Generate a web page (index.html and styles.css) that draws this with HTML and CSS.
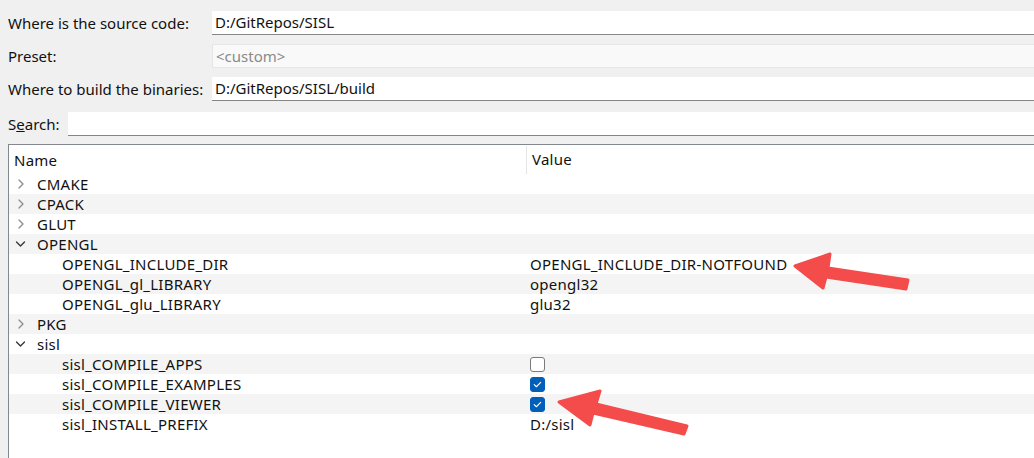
FILE: index.html
```html
<!DOCTYPE html>
<html>
<head>
<meta charset="utf-8">
<link rel="stylesheet" href="styles.css">
</head>
<body>
<div class="top">
  <div class="line">
    <div class="label">Where is the source code:</div>
    <div class="field">D:/GitRepos/SISL</div>
  </div>
  <div class="line">
    <div class="label">Preset:</div>
    <div class="field disabled">&lt;custom&gt;</div>
  </div>
  <div class="line">
    <div class="label">Where to build the binaries:</div>
    <div class="field">D:/GitRepos/SISL/build</div>
  </div>
  <div class="line search">
    <div class="label short">S<u>e</u>arch:</div>
    <div class="field"></div>
  </div>
</div>
<div class="tree">
  <div class="head">
    <div class="c1">Name</div>
    <div class="c2">Value</div>
  </div>
  <div class="row"><div class="c1"><svg class="exp" viewBox="0 0 20 20" width="20" height="20"><path d="M8 6 L12 10 L8 14" fill="none" stroke="#8c8c8c" stroke-width="1.3" stroke-linecap="round" stroke-linejoin="round"/></svg>CMAKE</div><div class="c2"></div></div>
  <div class="row alt"><div class="c1"><svg class="exp" viewBox="0 0 20 20" width="20" height="20"><path d="M8 6 L12 10 L8 14" fill="none" stroke="#8c8c8c" stroke-width="1.3" stroke-linecap="round" stroke-linejoin="round"/></svg>CPACK</div><div class="c2"></div></div>
  <div class="row"><div class="c1"><svg class="exp" viewBox="0 0 20 20" width="20" height="20"><path d="M8 6 L12 10 L8 14" fill="none" stroke="#8c8c8c" stroke-width="1.3" stroke-linecap="round" stroke-linejoin="round"/></svg>GLUT</div><div class="c2"></div></div>
  <div class="row alt"><div class="c1"><svg class="exp" viewBox="0 0 20 20" width="20" height="20"><path d="M5.5 8 L9.5 12 L13.5 8" fill="none" stroke="#333" stroke-width="1.3" stroke-linecap="round" stroke-linejoin="round"/></svg>OPENGL</div><div class="c2"></div></div>
  <div class="row"><div class="c1 child">OPENGL_INCLUDE_DIR</div><div class="c2">OPENGL_INCLUDE_DIR-NOTFOUND</div></div>
  <div class="row alt"><div class="c1 child">OPENGL_gl_LIBRARY</div><div class="c2">opengl32</div></div>
  <div class="row"><div class="c1 child">OPENGL_glu_LIBRARY</div><div class="c2">glu32</div></div>
  <div class="row alt"><div class="c1"><svg class="exp" viewBox="0 0 20 20" width="20" height="20"><path d="M8 6 L12 10 L8 14" fill="none" stroke="#8c8c8c" stroke-width="1.3" stroke-linecap="round" stroke-linejoin="round"/></svg>PKG</div><div class="c2"></div></div>
  <div class="row"><div class="c1"><svg class="exp" viewBox="0 0 20 20" width="20" height="20"><path d="M5.5 8 L9.5 12 L13.5 8" fill="none" stroke="#333" stroke-width="1.3" stroke-linecap="round" stroke-linejoin="round"/></svg>sisl</div><div class="c2"></div></div>
  <div class="row alt"><div class="c1 child">sisl_COMPILE_APPS</div><div class="c2"><span class="cb"></span></div></div>
  <div class="row"><div class="c1 child">sisl_COMPILE_EXAMPLES</div><div class="c2"><span class="cb on"><svg viewBox="0 0 16 16" width="15" height="15"><path d="M4.5 8.2 L6.8 10.4 L11.4 5.8" fill="none" stroke="#fff" stroke-width="1.2" stroke-linecap="round" stroke-linejoin="round"/></svg></span></div></div>
  <div class="row alt"><div class="c1 child">sisl_COMPILE_VIEWER</div><div class="c2"><span class="cb on"><svg viewBox="0 0 16 16" width="15" height="15"><path d="M4.5 8.2 L6.8 10.4 L11.4 5.8" fill="none" stroke="#fff" stroke-width="1.2" stroke-linecap="round" stroke-linejoin="round"/></svg></span></div></div>
  <div class="row"><div class="c1 child">sisl_INSTALL_PREFIX</div><div class="c2">D:/sisl</div></div>
</div>
<svg class="arrows" width="1034" height="458" viewBox="0 0 1034 458">
  <path d="M795 266 L830 254 L828 268 L908 280 L906 289 L826 277 L823 288 Z" fill="#f44b4b" stroke="#f44b4b" stroke-width="3" stroke-linejoin="round"/>
  <path d="M559 402 L600 391 L596 404 L687 426 L684 434 L593 413 L590 425 Z" fill="#f44b4b" stroke="#f44b4b" stroke-width="3" stroke-linejoin="round"/>
</svg>
</body>
</html>
```
FILE: styles.css
```css
html, body {
  margin: 0;
  padding: 0;
  background: #f0f0f0;
  width: 1034px;
  height: 458px;
  overflow: hidden;
  font-family: "Noto Sans", "Open Sans", sans-serif;
  font-size: 15px;
  color: #111;
  position: relative;
}
.top {
  display: flex;
  flex-direction: column;
  padding: 11px 0 0 8px;
}
.line {
  display: flex;
  align-items: stretch;
  height: 24px;
  margin-bottom: 9px;
}
.line.search {
  margin-top: 2px;
}
.label {
  width: 204px;
  line-height: 24px;
  white-space: nowrap;
}
.label.short {
  width: 60px;
}
.field {
  flex: 1;
  background: #fff;
  border-bottom: 1px solid #868686;
  box-sizing: border-box;
  line-height: 23px;
  padding-left: 3px;
  white-space: nowrap;
}
.field.disabled {
  background: #f9f9f9;
  border: 1px solid #e6e6e6;
  border-right: none;
  color: #8a8a8a;
  line-height: 22px;
  padding-left: 3px;
}
.tree {
  margin: 0 0 0 8px;
  background: #fff;
  border-top: 1px solid #828790;
  border-left: 1px solid #828790;
  height: 320px;
  position: relative;
  top: -1px;
  letter-spacing: 0.25px;
}
.head {
  display: flex;
  height: 29px;
  align-items: stretch;
}
.head .c1 {
  width: 512px;
  padding-left: 5px;
  line-height: 28px;
  border-right: 1px solid #e5e5e5;
  margin: 1px 0 0 0;
}
.head .c2 {
  padding-left: 5px;
  line-height: 29px;
}
.row {
  display: flex;
  height: 20px;
  line-height: 20px;
  white-space: nowrap;
}
.row.alt {
  background: #f4f4f4;
}
.row .c1 {
  width: 521px;
  padding-left: 2px;
  display: flex;
  align-items: center;
}
.row .c1.child {
  padding-left: 53px;
  width: 468px;
}
.row .c2 {
  flex: 1;
  display: flex;
  align-items: center;
}
.exp {
  display: block;
  flex: none;
  margin-left: 0;
  margin-right: 6px;
}
.cb {
  display: inline-block;
  width: 15px;
  height: 15px;
  box-sizing: border-box;
  border: 1px solid #7a7a7a;
  border-radius: 3px;
  background: #fff;
}
.cb.on {
  background: #005fb8;
  border-color: #005fb8;
}
.cb svg {
  display: block;
  margin: -1px;
}
.arrows {
  position: absolute;
  left: 0;
  top: 0;
  pointer-events: none;
}
```
